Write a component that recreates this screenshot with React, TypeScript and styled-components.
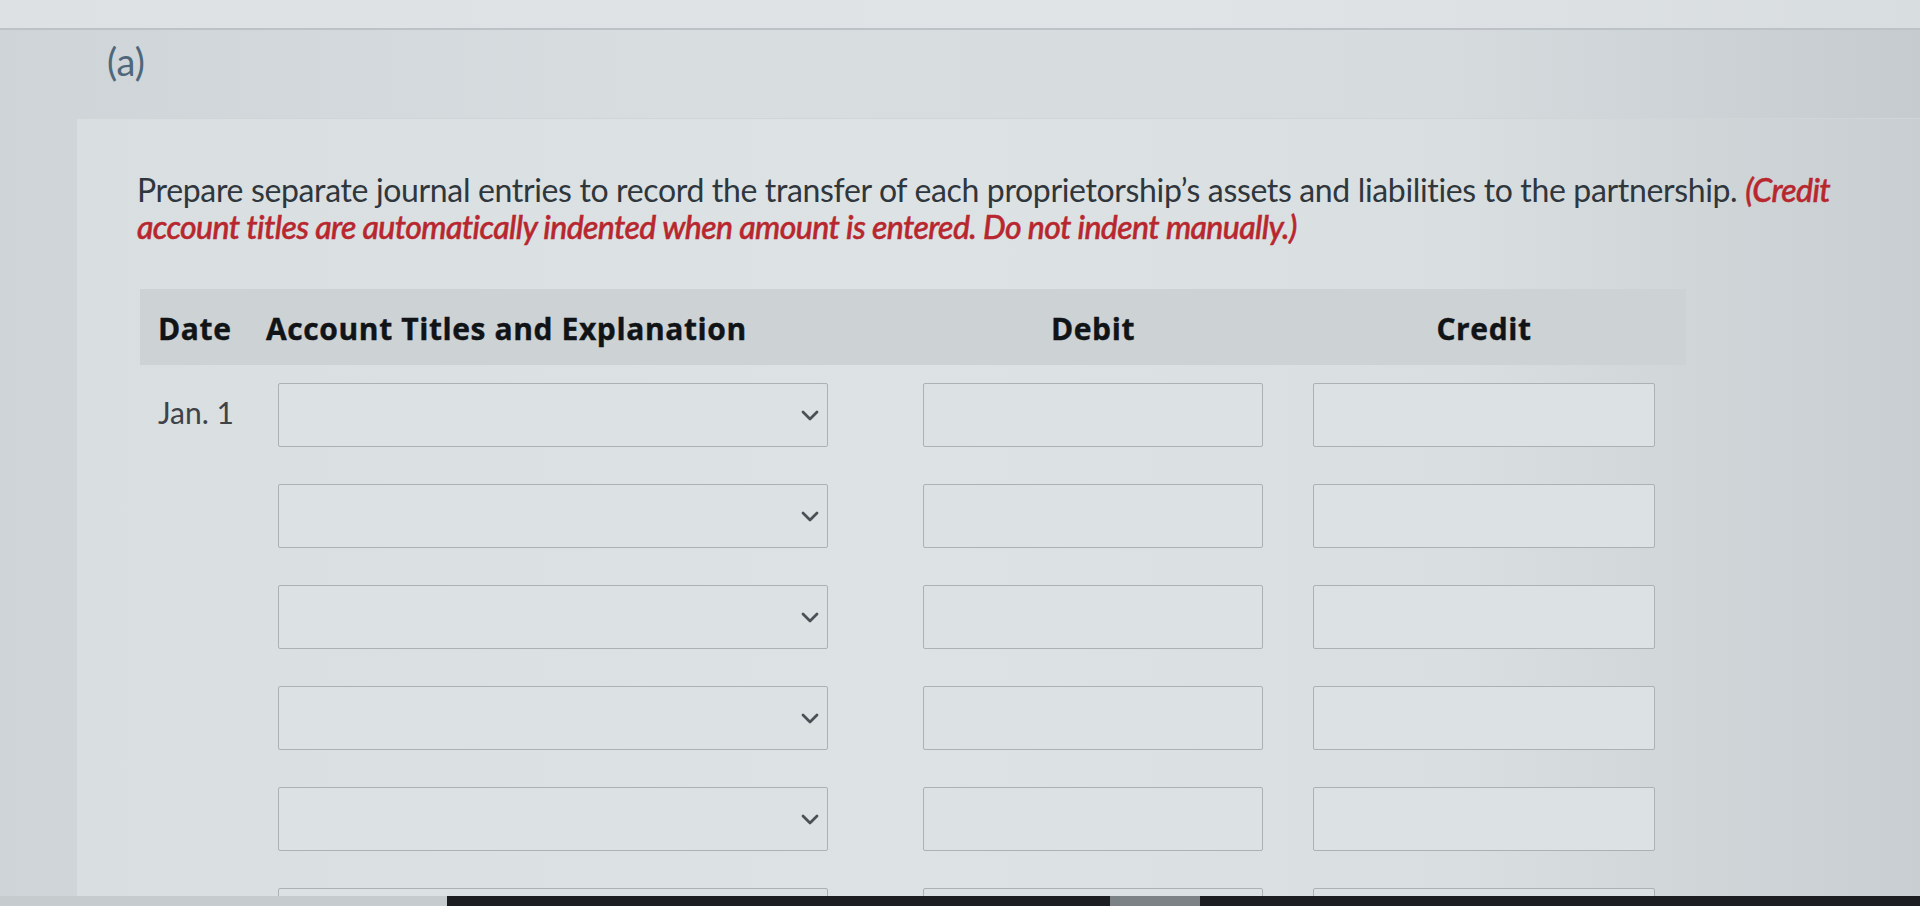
import React from "react";
import styled, { createGlobalStyle } from "styled-components";

const GlobalStyle = createGlobalStyle`
  html, body {
    margin: 0;
    padding: 0;
    background: #d3d8db;
  }
  body {
    font-family: Lato, "Open Sans", "Liberation Sans", sans-serif;
  }
  * { box-sizing: border-box; }
`;

const Page = styled.div`
  width: 1920px;
  height: 906px;
  display: flex;
  flex-direction: column;
  overflow: hidden;
`;

const Screen = styled.div`
  height: 896px;
  overflow: hidden;
  display: flex;
  flex-direction: column;
  background: linear-gradient(90deg, #ced4d7 0%, #d8dde0 35%, #d6dbde 75%, #c5cbce 100%);
`;

const TopStrip = styled.div`
  height: 30px;
  flex-shrink: 0;
  background: linear-gradient(90deg, #dde1e4 0%, #e0e4e6 60%, #d8dde0 100%);
  border-bottom: 2px solid #bcc2c6;
`;

const PartHeader = styled.div`
  height: 88px;
  flex-shrink: 0;
  padding: 9px 0 0 107px;
`;

const PartLabel = styled.span`
  font-family: Lato, sans-serif;
  font-weight: 400;
  font-size: 38px;
  line-height: 44px;
  color: #4e677a;
`;

const Panel = styled.section`
  flex: 1;
  margin-left: 77px;
  padding: 52px 0 0 60px;
  background: linear-gradient(90deg, #d9dee1 0%, #dde2e4 45%, #d9dee0 75%, #c8ced1 100%);
  border-top: 1px solid #d0d5d8;
`;

const Instruction = styled.p`
  margin: 0;
  font-family: Lato, sans-serif;
  font-size: 32px;
  line-height: 37px;
  color: #2f363c;
  white-space: nowrap;
  letter-spacing: -0.35px;
`;

const Note = styled.em`
  font-style: italic;
  font-weight: 500;
  letter-spacing: -0.6px;
  color: #b8262e;
  -webkit-text-stroke: 0.5px #b8262e;
`;

const Journal = styled.div`
  margin: 44px 0 0 3px;
  width: 1546px;
`;

const gridColumns = `108px 562px 435px 392px`;

const HeaderRow = styled.div`
  display: grid;
  grid-template-columns: ${gridColumns};
  align-items: center;
  height: 76px;
  padding: 2px 31px 0 18px;
  background: #cdd2d5;
`;

const HeadCell = styled.div<{ $center?: boolean; $width?: number }>`
  font-family: "Open Sans", sans-serif;
  font-weight: 700;
  font-size: 30px;
  letter-spacing: 0.6px;
  color: #111417;
  -webkit-text-stroke: 0.4px #111417;
  white-space: nowrap;
  text-align: ${(p) => (p.$center ? "center" : "left")};
  width: ${(p) => (p.$width ? `${p.$width}px` : "auto")};
  justify-self: ${(p) => (p.$width ? "end" : "start")};
`;

const Rows = styled.div`
  display: flex;
  flex-direction: column;
  gap: 37px;
  padding-top: 18px;
`;

const Row = styled.div`
  display: grid;
  grid-template-columns: ${gridColumns};
  height: 64px;
  padding: 0 31px 0 18px;
`;

const DateCell = styled.div`
  font-family: Lato, sans-serif;
  font-size: 30px;
  line-height: 40px;
  padding-top: 9px;
  color: #3d4348;
  white-space: nowrap;
`;

const Select = styled.div`
  margin-left: 12px;
  height: 64px;
  border: 1.5px solid #abb1b5;
  border-radius: 2px;
  background: #dce1e3;
  display: flex;
  align-items: center;
  justify-content: flex-end;
  padding-right: 8px;
`;

const AmountBox = styled.div<{ $width: number }>`
  justify-self: end;
  width: ${(p) => p.$width}px;
  height: 64px;
  border: 1.5px solid #abb1b5;
  border-radius: 2px;
  background: #dce1e3;
`;

const Taskbar = styled.div`
  height: 10px;
  display: flex;
  flex-shrink: 0;
`;

const TaskSeg = styled.div<{ $w?: number; $bg: string }>`
  ${(p) => (p.$w ? `width: ${p.$w}px;` : "flex: 1;")}
  background: ${(p) => p.$bg};
`;

const Chevron = () => (
  <svg width="18" height="11" viewBox="0 0 18 11" aria-hidden="true">
    <polyline
      points="2,2 9,9 16,2"
      fill="none"
      stroke="#4a5056"
      strokeWidth="2.8"
      strokeLinecap="round"
      strokeLinejoin="round"
    />
  </svg>
);

const rows = [0, 1, 2, 3, 4, 5];

export default function App() {
  return (
    <Page>
      <GlobalStyle />
      <Screen>
        <TopStrip />
        <PartHeader>
          <PartLabel>(a)</PartLabel>
        </PartHeader>
        <Panel>
          <Instruction>
            Prepare separate journal entries to record the transfer of each proprietorship’s assets and liabilities to the partnership.{" "}
            <Note>
              (Credit
              <br />
              account titles are automatically indented when amount is entered. Do not indent manually.)
            </Note>
          </Instruction>
          <Journal>
            <HeaderRow>
              <HeadCell>Date</HeadCell>
              <HeadCell>Account Titles and Explanation</HeadCell>
              <HeadCell $center $width={340}>Debit</HeadCell>
              <HeadCell $center $width={342}>Credit</HeadCell>
            </HeaderRow>
            <Rows>
              {rows.map((i) => (
                <Row key={i}>
                  <DateCell>{i === 0 ? "Jan. 1" : ""}</DateCell>
                  <Select>
                    <Chevron />
                  </Select>
                  <AmountBox $width={340} />
                  <AmountBox $width={342} />
                </Row>
              ))}
            </Rows>
          </Journal>
        </Panel>
      </Screen>
      <Taskbar>
        <TaskSeg $w={447} $bg="#c6cbce" />
        <TaskSeg $w={663} $bg="#1b1d20" />
        <TaskSeg $w={90} $bg="#7d8286" />
        <TaskSeg $bg="#1b1d20" />
      </Taskbar>
    </Page>
  );
}
